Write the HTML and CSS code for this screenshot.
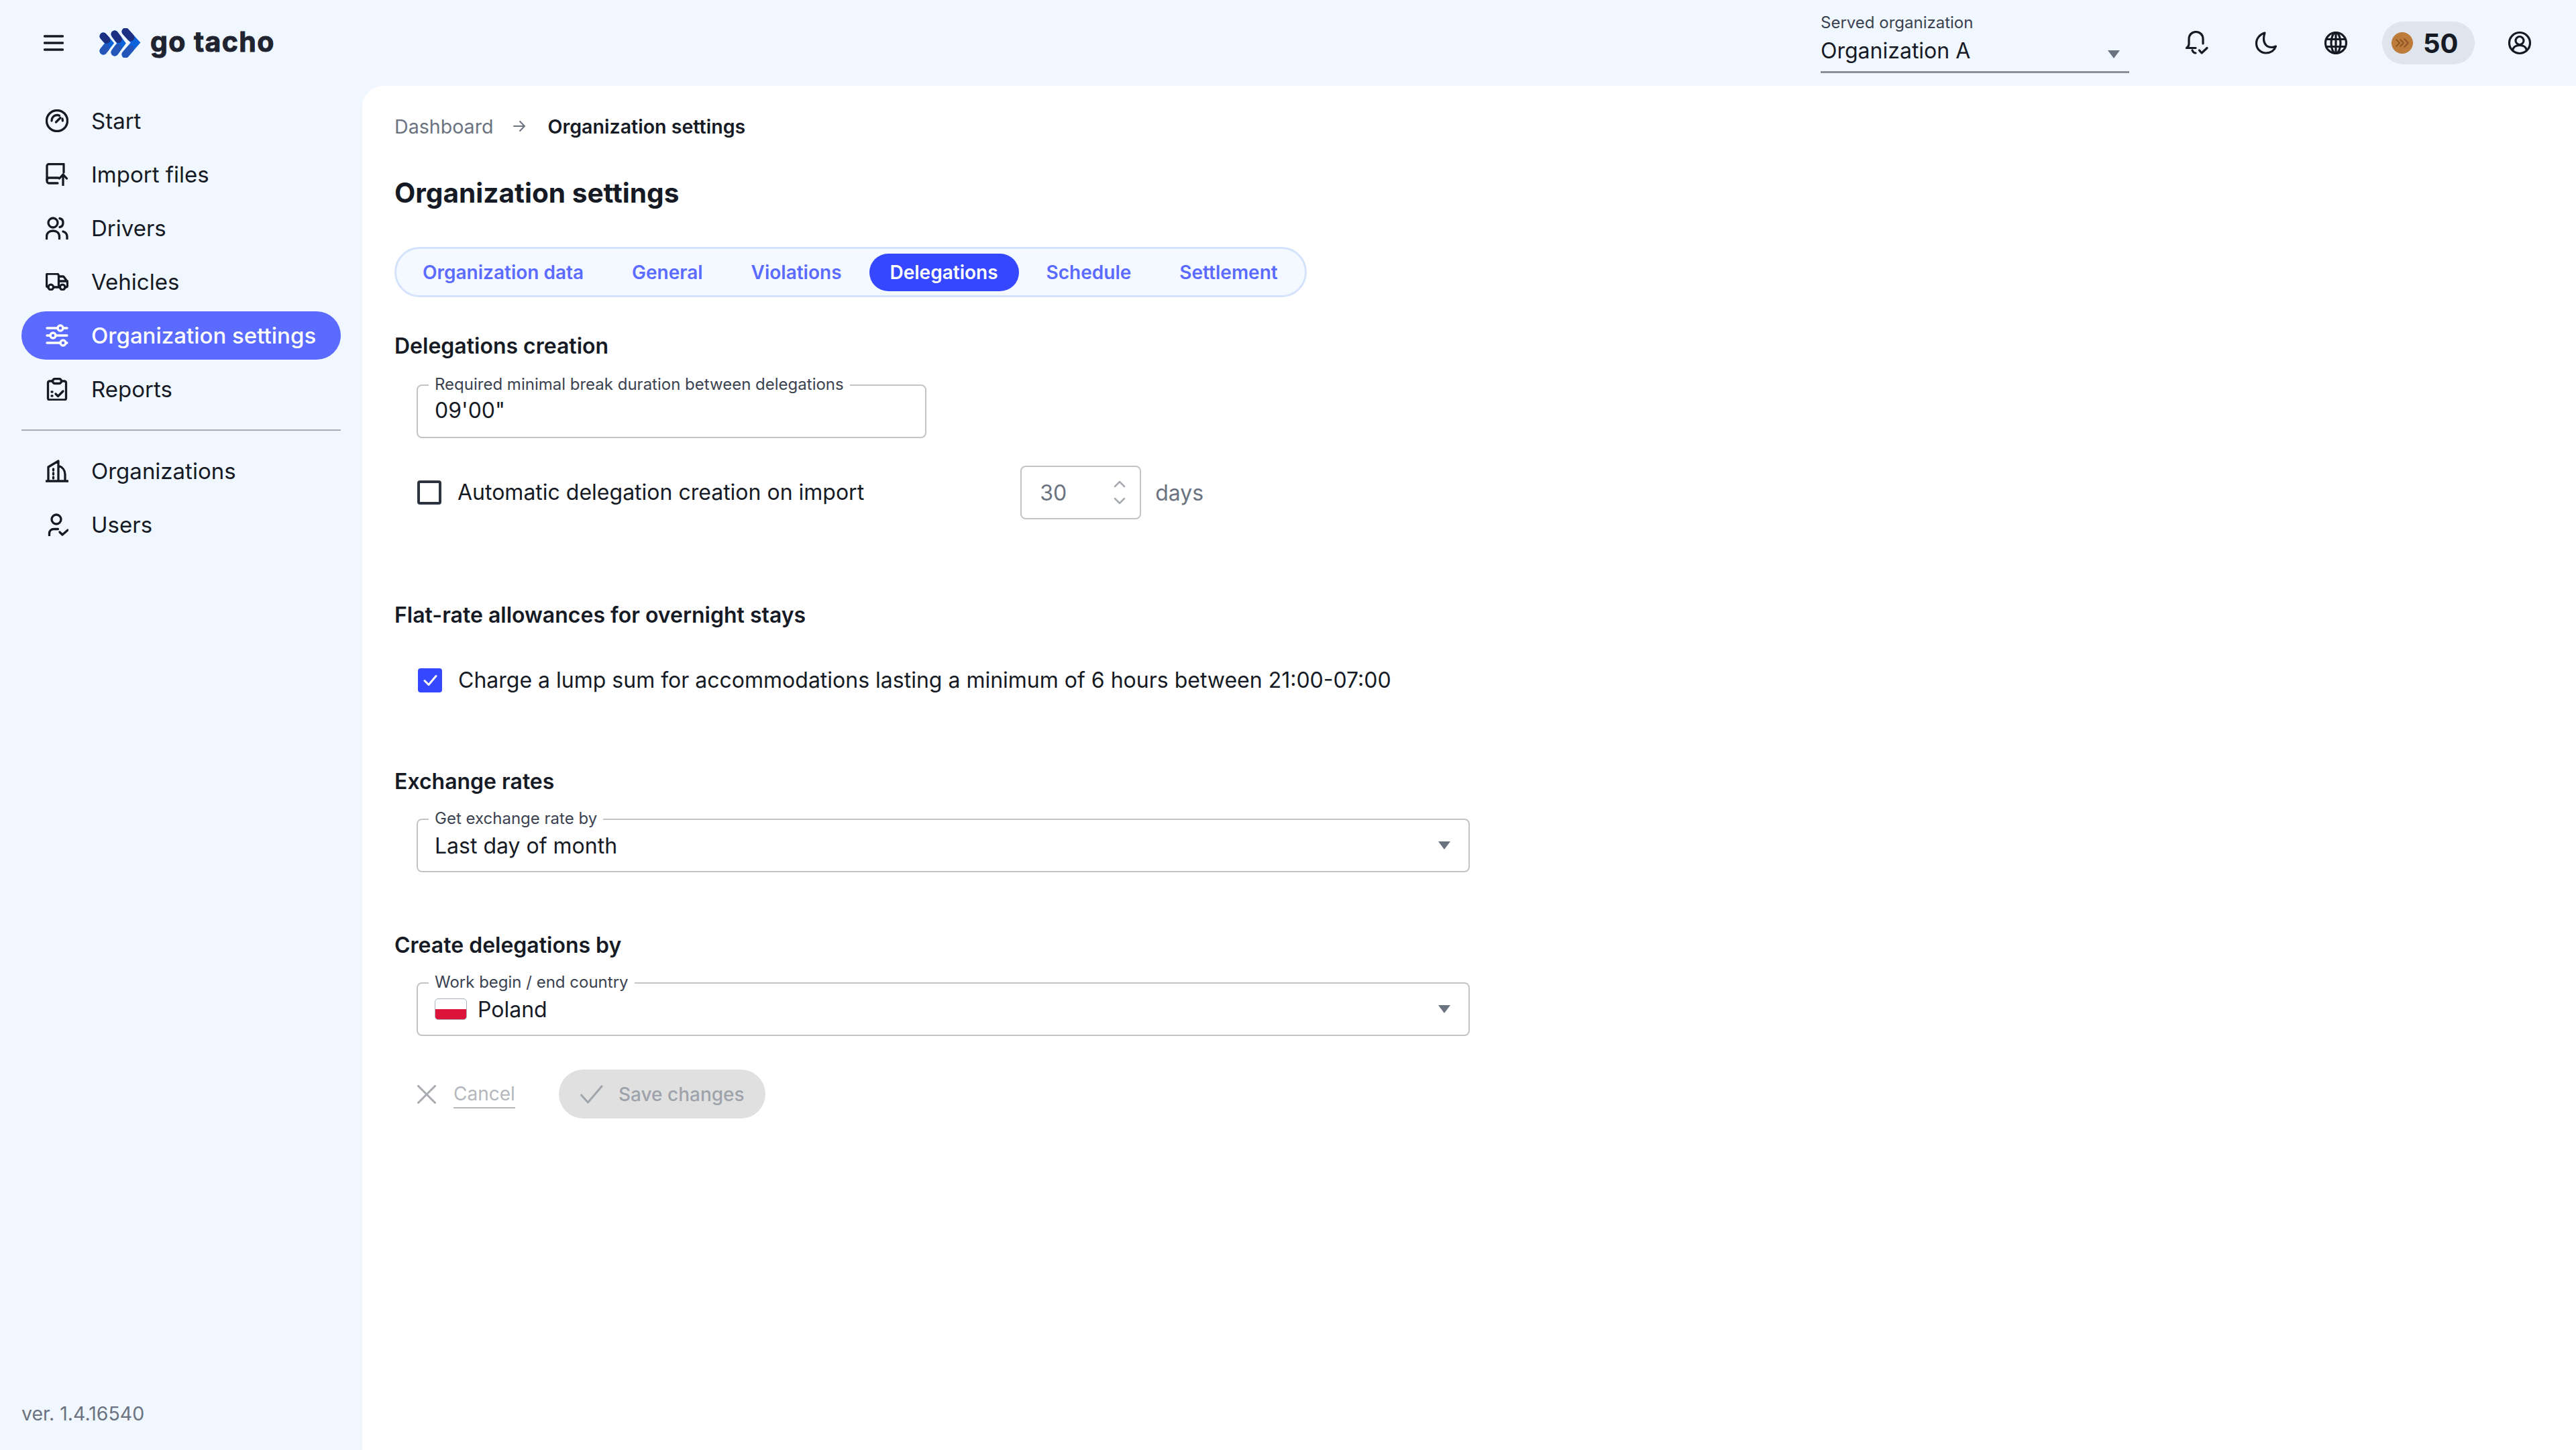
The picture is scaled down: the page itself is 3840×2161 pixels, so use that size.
FILE: index.html
```html
<!DOCTYPE html>
<html lang="en">
<head>
<meta charset="utf-8">
<title>go tacho - Organization settings</title>
<link rel="stylesheet" href="styles.css">
</head>
<body>
<div class="app">
  <header class="topbar">
    <div class="brand">
      <svg class="burger" viewBox="0 0 30 24"><path d="M1.500 2h27M1.500 12h27M1.500 22h27"/></svg>
      <svg class="logo-mark" viewBox="0 0 62 44">
        <g class="logo-tip"><path d="M6 12 15 22.500 6 34"/><path d="M23 9 33 22.500 23 36"/><path d="M39 5 54 21.500 39 39"/></g>
        <g class="logo-low"><path d="M6 34 10 29"/><path d="M23 36 28 29"/><path d="M39 39 46 31"/></g>
        <g class="logo-high"><path d="M6 12 11 17.500"/><path d="M23 9 28.500 16.500"/><path d="M39 5 47 14"/></g>
      </svg>
      <span class="logo-text">go tacho</span>
    </div>
    <div class="top-right">
      <div class="org-select">
        <span class="org-label">Served organization</span>
        <div class="org-value"><span>Organization A</span><i class="caret"></i></div>
      </div>
      <svg class="top-icon bell" viewBox="0 0 36 36"><path d="M15 25.500H1.500c2-1.500 3.500-3.500 3.500-6V12C5 6 9.500 1.500 15.500 1.500S26 6 26 12v7"/><path d="M10 29c1 2.500 3 4 5 4"/><path d="M20.500 29l3.500 4 8-7.500"/></svg>
      <svg class="top-icon moon" viewBox="0 0 36 36"><path d="M16 3C9 5 3.500 11 3.500 18.500 3.500 27 10 33 18 33c7 0 12.500-4 14.500-10-2 1-4 1.500-6 1.500-8 0-12-6-12-12.500C14.500 9 15 6 16 3z"/></svg>
      <svg class="top-icon globe" viewBox="0 0 36 36"><circle cx="18" cy="18" r="15.500"/><ellipse cx="18" cy="18" rx="7" ry="15.500"/><path d="M4 12.500h28M4 23.500h28M18 2.500v31"/></svg>
      <div class="credits">
        <svg class="coin" viewBox="0 0 32 32"><circle cx="16" cy="16" r="16"/><path d="M7 11l5 5-5 5M13 11l5 5-5 5M19 10l6 6-6 6"/></svg>
        <span>50</span>
      </div>
      <svg class="top-icon account" viewBox="0 0 36 36"><circle cx="18" cy="18" r="15.500"/><circle cx="18" cy="14.500" r="6"/><path d="M7.500 29c1-5 5-7.500 10.500-7.500S27.500 24 28.500 29"/></svg>
    </div>
  </header>

  <aside class="sidebar">
    <nav class="nav">
      <a class="nav-item"><svg class="nav-icon" viewBox="0 0 34 34"><circle cx="17" cy="17" r="15.500"/><path d="M9 17c0-5 3.500-8.500 8-8.500 1.500 0 2.500.3 3.500.8M25 14c.3 1 .4 2 .4 3M15.500 19 22 12.500"/></svg><span>Start</span></a>
      <a class="nav-item"><svg class="nav-icon" viewBox="0 0 34 34"><path d="M27 14V1.500H5a3 3 0 0 0-3 3V27a3 3 0 0 0 3 3h13"/><path d="M2 25c0-2 1-3 3-3h14"/><path d="M26 33V17M20.500 23l5.500-6 5.500 6"/></svg><span>Import files</span></a>
      <a class="nav-item"><svg class="nav-icon" viewBox="0 0 34 34"><circle cx="11" cy="9" r="7"/><path d="M1.500 33v-3c0-6 4-9 9.500-9s9.500 3 9.500 9v3"/><path d="M21 2.500c3 .5 5 3 5 6.500s-2 6-5 6.500M26 22c3.500 1 6 4 6 8v3"/></svg><span>Drivers</span></a>
      <a class="nav-item"><svg class="nav-icon truck" viewBox="0 0 33 26"><path d="M3.300 21H3a2 2 0 0 1-2-2V3a2 2 0 0 1 2-2h13a3 3 0 0 1 3 3v17M11 21h10"/><path d="M19 5h6a2 2 0 0 1 2 1l5 7v6a2 2 0 0 1-2 2h-1.500M19 12h13"/><circle cx="7.300" cy="21" r="3.800"/><circle cx="24.700" cy="21" r="3.800"/></svg><span>Vehicles</span></a>
      <a class="nav-item active"><svg class="nav-icon" viewBox="0 0 34 34"><path d="M2 6h16M26 6h6M2 17h5M15 17h17M2 28h20M30 28h2"/><circle cx="22" cy="6" r="4"/><circle cx="11" cy="17" r="4"/><circle cx="26" cy="28" r="4"/></svg><span>Organization settings</span></a>
      <a class="nav-item"><svg class="nav-icon" viewBox="0 0 34 34"><path d="M10 5H6a2.500 2.500 0 0 0-2.500 2.500v23A2.500 2.500 0 0 0 6 33h22a2.500 2.500 0 0 0 2.500-2.500v-23A2.500 2.500 0 0 0 28 5h-4"/><rect x="10.500" y="1.500" width="13" height="7" rx="3.500"/><path d="M9 21h1M9 27h1M15 24l3.500 3.500L26 20"/></svg><span>Reports</span></a>
      <hr class="nav-divider">
      <a class="nav-item"><svg class="nav-icon" viewBox="0 0 34 34"><path d="M1 32h32M4 32V11l15-9v30M19 9c6 2 10 7 10 13v10M11.500 14v2M11.500 20v2M11.500 26v2"/></svg><span>Organizations</span></a>
      <a class="nav-item"><svg class="nav-icon" viewBox="0 0 34 34"><circle cx="16" cy="9" r="7"/><path d="M5.500 33v-3c0-4 3-6.500 7-6.500h6M21 28l4 4 8-7"/></svg><span>Users</span></a>
    </nav>
    <div class="version">ver. 1.4.16540</div>
  </aside>

  <main class="content">
    <div class="crumbs">
      <span class="crumb-link">Dashboard</span>
      <svg class="crumb-arrow" viewBox="0 0 20 20"><path d="M2 10h16M11 3l7 7-7 7"/></svg>
      <span class="crumb-now">Organization settings</span>
    </div>
    <h1 class="page-title">Organization settings</h1>
    <div class="tabs">
      <span class="tab">Organization data</span>
      <span class="tab">General</span>
      <span class="tab">Violations</span>
      <span class="tab current">Delegations</span>
      <span class="tab">Schedule</span>
      <span class="tab">Settlement</span>
    </div>

    <h2 class="section s1">Delegations creation</h2>
    <div class="field narrow f1">
      <span class="float">Required minimal break duration between delegations</span>
      <span>09'00"</span>
    </div>
    <div class="auto-row">
      <label class="check"><i class="box"></i><span>Automatic delegation creation on import</span></label>
      <div class="days">
        <div class="spin"><span>30</span><svg class="spin-icon" viewBox="0 0 20 36"><path d="M3 9l7-7 7 7M3 27l7 7 7-7"/></svg></div>
        <span>days</span>
      </div>
    </div>

    <h2 class="section s2">Flat-rate allowances for overnight stays</h2>
    <label class="check lump"><i class="box on"><svg viewBox="0 0 36 36"><path d="M10 18.500l6 6 11-13"/></svg></i><span>Charge a lump sum for accommodations lasting a minimum of 6 hours between 21:00-07:00</span></label>

    <h2 class="section s3">Exchange rates</h2>
    <div class="field wide f2">
      <span class="float">Get exchange rate by</span>
      <span>Last day of month</span>
      <i class="caret"></i>
    </div>

    <h2 class="section s4">Create delegations by</h2>
    <div class="field wide f2">
      <span class="float">Work begin / end country</span>
      <span class="flag"></span>
      <span>Poland</span>
      <i class="caret"></i>
    </div>

    <div class="actions">
      <span class="cancel"><svg viewBox="0 0 28 28"><path d="M1.500 1.500l25 25M26.500 1.500l-25 25"/></svg><u>Cancel</u></span>
      <span class="save"><svg viewBox="0 0 34 28"><path d="M1.500 15l10 11L32 2"/></svg>Save changes</span>
    </div>
  </main>
</div>
</body>
</html>
```
FILE: styles.css
```css
* { box-sizing: border-box; }
html, body { margin: 0; height: 100%; }
body {
  font-family: Inter, "Noto Sans", sans-serif;
  color: #151a24;
  background: #f0f7ff;
}
.app {
  height: 2161px;
  display: grid;
  grid-template-columns: 540px 1fr;
  grid-template-rows: 128px 1fr;
}
svg { display: block; fill: none; stroke: currentColor; stroke-linecap: round; stroke-linejoin: round; }

/* top bar */
.topbar {
  grid-column: 1 / 3;
  display: flex;
  justify-content: space-between;
  align-items: center;
  padding: 0 66px 0 65px;
}
.brand { display: flex; align-items: center; }
.burger { width: 30px; height: 24px; stroke-width: 3.5px; margin-right: 53px; }
.logo-mark { width: 62px; height: 44px; margin-right: 14px; stroke-width: 11px; }
.logo-low { stroke: #2356b8; }
.logo-high { stroke: #1c2f80; }
.logo-tip { stroke: #0b63dc; stroke-linejoin: miter; }
.logo-text { font-weight: 700; font-size: 41px; line-height: 44px; letter-spacing: 1.400px; -webkit-text-stroke: 1px #1f2430; color: #1f2430; position: relative; top: -2px; }
.top-right { display: flex; align-items: center; }
.org-select { width: 460px; margin-right: 84px; border-bottom: 3px solid #8a8f98; height: 90px; }
.org-label { display: block; font-size: 24px; line-height: 30px; color: #3b4250; }
.org-value { display: flex; justify-content: space-between; align-items: center; font-size: 32px; line-height: 44px; padding-right: 14px; margin-top: 5px; }
.caret { width: 0; height: 0; border: 9.500px solid transparent; border-top: 12px solid #6b7280; border-bottom: 0; display: block; }
.org-value .caret { margin-top: 10px; }
.top-icon { width: 36px; height: 36px; stroke-width: 3.200px; color: #151a24; }
.bell { margin-right: 66px; }
.moon { margin-right: 68px; }
.globe { margin-right: 51px; }
.credits { width: 138px; height: 64px; border-radius: 32px; background: #dfe5ed; display: flex; align-items: center; padding-left: 14px; gap: 15px; font-size: 40px; font-weight: 700; margin-right: 49px; }
.coin { width: 32px; height: 32px; }
.coin circle { fill: #bd7c3c; stroke: none; }
.coin path { stroke: #8d5524; stroke-width: 1.800px; }

/* sidebar */
.sidebar { display: flex; flex-direction: column; padding: 16px 32px 34px; }
.nav { display: flex; flex-direction: column; gap: 8px; }
.nav-item {
  height: 72px;
  display: flex;
  align-items: center;
  gap: 34px;
  padding-left: 36px;
  border-radius: 36px;
  font-size: 33px;
  color: #151a24;
}
.nav-icon { width: 34px; height: 34px; stroke-width: 3.300px; flex: none; }
.truck { height: 26px; }
.active { background: #5b6bff; color: #fff; font-weight: 550; }
.nav-divider { width: 100%; height: 2px; border: 0; background: #a9adb2; margin: 16px 0; }
.version { margin-top: auto; font-size: 28.500px; line-height: 40px; color: #6b7280; }

/* main */
.content { background: #fff; border-top-left-radius: 32px; padding: 40px 0 0 48px; }
.crumbs { display: flex; align-items: center; height: 40px; font-size: 28.600px; }
.crumb-link { color: #6b7280; }
.crumb-arrow { width: 20px; height: 20px; margin: 0 32px 0 29px; stroke-width: 2px; color: #6b7280; }
.crumb-now { font-weight: 600; }
.page-title { margin: 50px 0 0; font-size: 40.600px; line-height: 60px; font-weight: 700; }
.tabs {
  margin-top: 50px;
  width: 1360px;
  height: 75px;
  display: flex;
  align-items: center;
  gap: 10px;
  padding: 0 8px;
  border: 3px solid #d3e3fb;
  border-radius: 38px;
  background: #f4f8ff;
}
.tab { height: 56px; display: flex; align-items: center; flex: none; white-space: nowrap; padding: 0 31px; border-radius: 28px; font-size: 28px; font-weight: 600; color: #5b6bff; }
.current { background: #3548ff; color: #fff; }
.section { margin: 0; font-size: 32px; line-height: 40px; font-weight: 600; }
.s1 { margin-top: 53px; }
.s2 { margin-top: 123px; }
.s3 { margin-top: 113px; }
.s4 { margin-top: 89px; }
.field {
  position: relative;
  margin-left: 33px;
  height: 80px;
  display: flex;
  align-items: center;
  gap: 16px;
  padding: 0 25px;
  border: 2px solid #c4c4c4;
  border-radius: 8px;
  font-size: 32px;
}
.narrow { width: 760px; padding-bottom: 3px; }
.wide { width: 1570px; }
.f1 { margin-top: 37px; }
.f2 { margin-top: 35px; }
.float { position: absolute; left: 16px; top: -17px; padding: 0 9px; background: #fff; font-size: 24px; line-height: 30px; color: #3b4250; }
.field .caret { margin-left: auto; margin-right: 2px; }
.auto-row { margin: 41px 0 0 34px; display: flex; align-items: center; height: 80px; }
.check { display: flex; align-items: center; gap: 24px; font-size: 32px; line-height: 36px; }
.box { width: 36px; height: 36px; border: 4px solid #2c3340; border-radius: 4px; display: block; flex: none; }
.on { background: #3548ff; border: 0; color: #fff; }
.on svg { width: 36px; height: 36px; stroke-width: 3px; }
.days { margin-left: 233px; display: flex; align-items: center; gap: 21px; font-size: 32px; color: #6b7280; }
.spin { width: 180px; height: 80px; border: 2px solid #c4c4c4; border-radius: 8px; display: flex; align-items: center; justify-content: space-between; padding: 0 20px 0 27px; }
.spin-icon { width: 20px; height: 36px; stroke-width: 2.500px; color: #a7abb1; }
.lump { margin: 59px 0 0 35px; }
.actions { margin: 50px 0 0 34px; display: flex; align-items: center; }
.cancel { display: flex; align-items: center; gap: 26px; width: 211px; font-size: 28px; color: #b4b8bd; }
.cancel svg { width: 28px; height: 28px; stroke-width: 3px; color: #a7abb1; }
.cancel u { text-decoration: none; border-bottom: 2px solid #b4b8bd; line-height: 40px; padding-top: 0; }
.save { width: 308px; height: 73px; border-radius: 37px; background: #e0e0e0; display: flex; align-items: center; gap: 23px; padding-left: 32px; font-size: 28px; font-weight: 500; color: #9ea3ab; }
.save svg { width: 34px; height: 28px; stroke-width: 3px; color: #a0a5ac; }
.flag { width: 48px; height: 32px; border-radius: 5px; border: 1px solid #a8b0bc; background: linear-gradient(#fff 50%, #dc143c 50%); flex: none; }
```
